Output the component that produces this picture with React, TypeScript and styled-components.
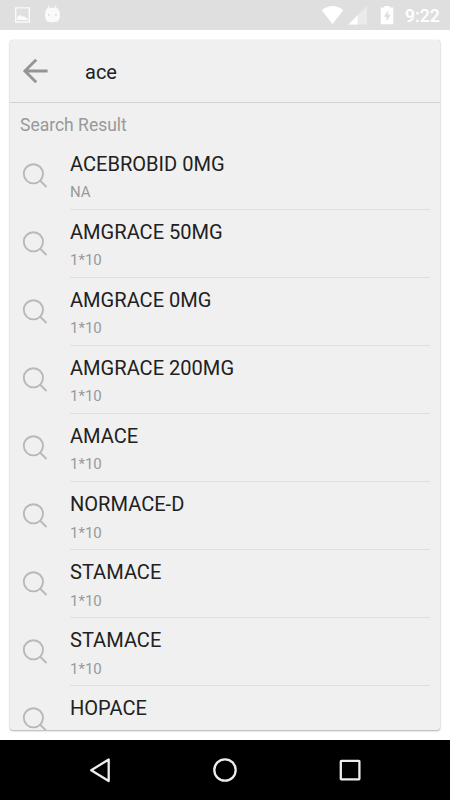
import React from "react";
import styled, { createGlobalStyle } from "styled-components";

const GlobalStyle = createGlobalStyle`
  *, *::before, *::after { box-sizing: border-box; }
  body { margin: 0; background: #fff; font-family: Roboto, "Liberation Sans", sans-serif; }
`;

const Screen = styled.div`
  display: flex;
  flex-direction: column;
  width: 450px;
  height: 800px;
  overflow: hidden;
  background: #fff;
`;

const StatusBar = styled.header`
  display: flex;
  justify-content: space-between;
  flex: 0 0 30px;
  height: 30px;
  background: #dfdfdf;
  color: #fff;
`;

const StatusIcons = styled.svg<{ $width: number }>`
  display: block;
  width: ${(p) => p.$width}px;
  height: 30px;
`;

const StatusRight = styled.div`
  display: flex;
  height: 30px;
  padding-right: 10px;
`;

const Clock = styled.span`
  width: 35px;
  font-size: 17.6px;
  font-weight: 500;
  line-height: 30px;
  padding-top: 1px;
  height: 30px;
  white-space: nowrap;
`;

const Main = styled.main`
  display: flex;
  flex: 1;
  min-height: 0;
  padding: 9.5px 10px 10px;
`;

const Card = styled.section`
  display: flex;
  flex: 1;
  flex-direction: column;
  overflow: hidden;
  border-radius: 3px;
  background: #f0f0f0;
  box-shadow: 0 1px 2px rgba(0, 0, 0, 0.3), 0 0 1px rgba(0, 0, 0, 0.22);
`;

const SearchHeader = styled.div`
  display: flex;
  align-items: center;
  flex: 0 0 63px;
  padding-left: 12px;
  border-bottom: 1px solid #d2d2d2;
`;

const BackIcon = styled.svg`
  width: 28px;
  height: 28px;
  margin-right: 35px;
`;

const Query = styled.div`
  font-size: 20px;
  line-height: 24px;
  padding-top: 2px;
  color: #212121;
`;

const SectionTitle = styled.h2`
  flex: 0 0 39.15px;
  margin: 0;
  padding: 10.4px 10px 0;
  color: #999;
  font-size: 17.5px;
  font-weight: 400;
  line-height: 24px;
`;

const Results = styled.ul`
  flex: 1;
  min-height: 0;
  margin: 0;
  padding: 0;
  list-style: none;
  overflow: hidden;
`;

const Result = styled.li`
  display: flex;
  height: 68.1px;
  padding: 0 10px;
`;

const SearchIcon = styled.svg`
  flex: 0 0 50px;
  width: 50px;
  height: 68px;
`;

const ResultText = styled.div`
  flex: 1;
  padding-top: 9.9px;
  border-bottom: 1px solid #dfdfdf;
`;

const Name = styled.div`
  color: #212121;
  font-size: 20.07px;
  line-height: 24px;
  white-space: nowrap;
`;

const Pack = styled.div`
  margin-top: 7.5px;
  color: #999;
  font-size: 15px;
  line-height: 18px;
`;

const NavBar = styled.nav`
  display: flex;
  align-items: center;
  justify-content: center;
  gap: 95px;
  flex: 0 0 60px;
  background: #000;
`;

const NavIcon = styled.svg`
  width: 30px;
  height: 30px;
  fill: none;
  stroke: #ededed;
  stroke-width: 2.3;
`;

const results: { name: string; pack?: string }[] = [
  { name: "ACEBROBID 0MG", pack: "NA" },
  { name: "AMGRACE 50MG", pack: "1*10" },
  { name: "AMGRACE 0MG", pack: "1*10" },
  { name: "AMGRACE 200MG", pack: "1*10" },
  { name: "AMACE", pack: "1*10" },
  { name: "NORMACE-D", pack: "1*10" },
  { name: "STAMACE", pack: "1*10" },
  { name: "STAMACE", pack: "1*10" },
  { name: "HOPACE" },
];

export default function App() {
  return (
    <Screen>
      <GlobalStyle />
      <StatusBar>
        <StatusIcons $width={70} viewBox="0 0 70 30" fill="#fafafa">
          <path fillRule="evenodd" d="M15 7.2h15v15.5H15zM16.4 8.6v12.7h12.2V8.6z" />
          <path d="M17 20v-2.8l3-2.4 2.2 2 1.6-.7 4.2 3V20z" />
          <path d="M48.3 5.4l1.6 3.2M56.3 5.4l-1.6 3.2" stroke="#fafafa" strokeWidth="1.1" />
          <path
            fillRule="evenodd"
            d="M47.2 8.3Q52.4 7 57.6 8.3Q60 10.5 60 14.5Q60 19.5 57.7 21.5Q52.4 23 47.2 21.5Q45 19.5 45 14.5Q45 10.5 47.2 8.3zM48 14.1v1.6h1.7v-1.6zM55 14.1v1.6h1.7v-1.6z"
          />
        </StatusIcons>
        <StatusRight>
          <StatusIcons $width={85} viewBox="320 0 85 30" fill="#fff">
            <path d="M332.5 24L321.8 10.2Q332.5 1.8 343.2 10.2z" />
            <path d="M367 5.8V24.5H348.5z" opacity="0.35" />
            <path d="M357.6 15.2V24.5H348.5z" />
            <path
              fillRule="evenodd"
              d="M384.4 7.5V6h5.2v1.5h3.7v16.8h-12.5V7.5zM388.2 10.5l-4.4 6.3h2.7v4.4l4.4-6.4h-2.7z"
            />
          </StatusIcons>
          <Clock>9:22</Clock>
        </StatusRight>
      </StatusBar>
      <Main>
        <Card>
          <SearchHeader>
            <BackIcon viewBox="22 56.5 28 28" fill="none" stroke="#949494" strokeWidth="2.9">
              <path d="M47.6 70.5H25M36.2 59.2L24.9 70.5L36.2 81.8" />
            </BackIcon>
            <Query>ace</Query>
          </SearchHeader>
          <SectionTitle>Search Result</SectionTitle>
          <Results>
            {results.map((item, i) => (
              <Result key={i}>
                <SearchIcon viewBox="0 0 50 68" fill="none" stroke="#b8b8b8" strokeWidth="1.9">
                  <circle cx="13.4" cy="31.8" r="9.6" />
                  <path d="M20.2 38.8l6.3 6.2" />
                </SearchIcon>
                <ResultText>
                  <Name>{item.name}</Name>
                  {item.pack && <Pack>{item.pack}</Pack>}
                </ResultText>
              </Result>
            ))}
          </Results>
        </Card>
      </Main>
      <NavBar>
        <NavIcon viewBox="0 0 30 30">
          <path d="M23.7 4.5v21.5L6.2 15.2z" strokeLinejoin="round" />
        </NavIcon>
        <NavIcon viewBox="0 0 30 30">
          <circle cx="15" cy="15" r="10.7" />
        </NavIcon>
        <NavIcon viewBox="0 0 30 30">
          <rect x="5.8" y="5.9" width="18.6" height="18.4" rx="0.5" />
        </NavIcon>
      </NavBar>
    </Screen>
  );
}
